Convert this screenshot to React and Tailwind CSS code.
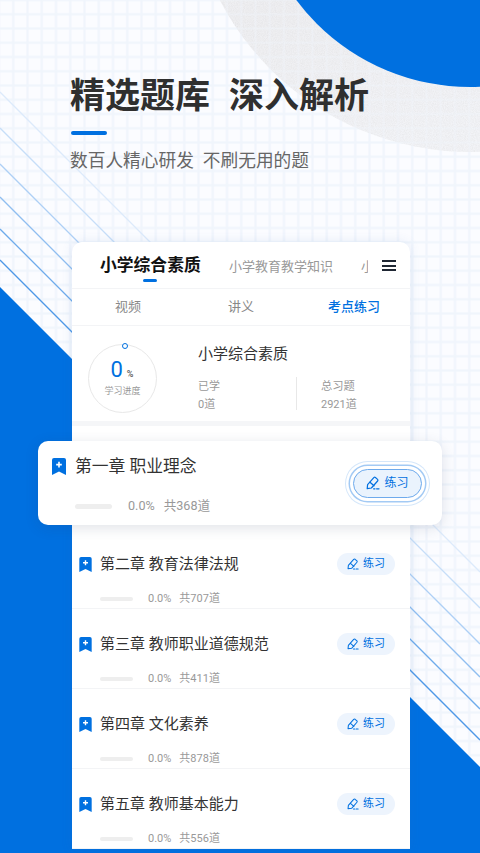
import React from 'react';

const chapters = [
  { title: '第二章 教育法律法规', total: 707 },
  { title: '第三章 教师职业道德规范', total: 411 },
  { title: '第四章 文化素养', total: 878 },
  { title: '第五章 教师基本能力', total: 556 },
];

const Backdrop = () => (
  <svg className="absolute inset-0" width="480" height="853" viewBox="0 0 480 853">
    <defs>
      <pattern id="grid" width="14.25" height="14.25" patternUnits="userSpaceOnUse" patternTransform="translate(6.125 7.125)">
        <path d="M7.125 0V14.25M0 7.125H14.25" stroke="#f0f5fc" strokeWidth="2" fill="none" />
      </pattern>
      <linearGradient id="ring" x1="0" y1="0" x2="0.3" y2="1">
        <stop offset="0.5" stopColor="#f5f5f7" />
        <stop offset="0.72" stopColor="#eeeef1" />
        <stop offset="1" stopColor="#f2f3f6" />
      </linearGradient>
      <filter id="grain" x="0" y="0" width="100%" height="100%">
        <feTurbulence type="fractalNoise" baseFrequency="0.9" numOctaves="2" seed="4" />
        <feColorMatrix values="0 0 0 0 0.5  0 0 0 0 0.5  0 0 0 0 0.5  0.35 0 0 0 -0.12" />
        <feComposite in2="SourceGraphic" operator="in" />
        <feMerge>
          <feMergeNode in="SourceGraphic" />
          <feMergeNode />
        </feMerge>
      </filter>
    </defs>
    <rect width="480" height="853" fill="#fbfcff" />
    <rect width="480" height="853" fill="url(#grid)" />
    <circle cx="470" cy="-130" r="282" fill="url(#ring)" filter="url(#grain)" />
    <rect width="480" height="853" fill="url(#grid)" opacity="0.4" />
    <circle cx="470" cy="-130" r="217" fill="#0070e0" />
    {/* diagonal stripes */}
    <path d="M0 92L480 572" stroke="#dceafb" strokeWidth="1.3" />
    <path d="M0 128L480 608" stroke="#c6def8" strokeWidth="1.3" />
    <path d="M0 164L480 644" stroke="#aed0f5" strokeWidth="1.3" />
    <path d="M0 197L480 677" stroke="#8fbef0" strokeWidth="1.3" />
    <path d="M0 229L480 709" stroke="#6eabeb" strokeWidth="1.3" />
    <path d="M0 260L480 740" stroke="#4e98e7" strokeWidth="1.3" />
    <path d="M0 287L480 767V853H0Z" fill="#0070e0" />
  </svg>
);

const Bookmark = ({ className }) => (
  <svg className={className} viewBox="0 0 14 17">
    <path d="M2 0H12A2 2 0 0 1 14 2V17L7 13.6L0 17V2A2 2 0 0 1 2 0Z" fill="#0070e0" />
    <path d="M7 3.8V9.4M4.2 6.6H9.8" stroke="#fff" strokeWidth="1.6" />
  </svg>
);

const PenIcon = ({ className }) => (
  <svg className={className} viewBox="0 0 14 14" fill="none" stroke="#0070e0" strokeWidth="1.2" strokeLinejoin="round" strokeLinecap="round">
    <path d="M1.2 12.6L1.6 8.6L7.8 1.6Q8.6 0.9 9.4 1.5L11.6 3.4Q12.3 4.2 11.6 5L5.4 12L1.2 12.6Z" />
    <path d="M4 6.2L8 9.8" />
    <path d="M7.6 12.8H9M10.6 12.8H13" />
  </svg>
);

const App = () => {
  return (
    <div className="relative w-[480px] h-[853px] overflow-hidden font-['Roboto','Noto_Sans_CJK_SC',sans-serif]">
      <Backdrop />

      <div className="relative pl-[70px] pt-[71px]">
        <div className="flex gap-[19px] text-[35px] leading-[52px] font-bold text-[#2f2f2f] h-[52px]">
          <span>精选题库</span>
          <span>深入解析</span>
        </div>
        <div className="w-[36px] h-[4px] ml-px mt-[8px] rounded-full bg-[#0070e0]" />
        <div className="flex gap-[9px] mt-[13px] text-[17.7px] leading-[26px] text-[#666666]">
          <span>数百人精心研发</span>
          <span>不刷无用的题</span>
        </div>
      </div>

      <div className="relative w-[338px] ml-[72px] mt-[68px] bg-white rounded-t-[10px] shadow-[0_0_12px_rgba(60,110,180,0.12)]">
        {/* subject tabs */}
        <div className="relative flex h-[47px] border-b border-[#f3f4f6] overflow-hidden">
          <div className="relative ml-[28px] w-[101px]">
            <div className="text-[16.8px] leading-[24px] mt-[11px] font-bold text-[#111111] whitespace-nowrap">小学综合素质</div>
            <div className="absolute left-[43px] top-[37px] w-[14px] h-[3px] rounded-full bg-[#0070e0]" />
          </div>
          <div className="ml-[28px] mt-[15px] text-[13px] leading-[20px] text-[#999999] whitespace-nowrap">小学教育教学知识</div>
          <div className="ml-[28px] mt-[15px] text-[13px] leading-[20px] text-[#999999] w-[7px] overflow-hidden whitespace-nowrap">小学</div>
          <div className="absolute right-[14px] top-[18px] w-[14px] h-[11px] flex flex-col justify-between">
            <div className="h-[2px] bg-[#1f2733]" />
            <div className="h-[2px] bg-[#1f2733]" />
            <div className="h-[2px] bg-[#1f2733]" />
          </div>
        </div>

        {/* section tabs */}
        <div className="flex h-[37px] items-center border-b border-[#f3f4f6] text-[13px] text-[#888888]">
          <span className="ml-[43px]">视频</span>
          <span className="ml-[87px]">讲义</span>
          <span className="ml-[74px] font-medium text-[#0070e0]">考点练习</span>
        </div>

        {/* summary */}
        <div className="flex h-[100px] border-b-[5px] border-[#f5f6f8]">
          <div className="relative w-[69px] h-[69px] ml-[16px] mt-[18px] rounded-full border border-[#e8e8e8] flex flex-col items-center">
            <div className="absolute left-[33px] -top-[2px] w-[6px] h-[6px] rounded-full border-[1.5px] border-[#0070e0] bg-white" />
            <div className="flex items-baseline mt-[11px] h-[28px] -ml-px">
              <span className="text-[22px] leading-[28px] text-[#0070e0]">0</span>
              <span className="text-[9px] ml-[4px] font-medium text-[#555555]">%</span>
            </div>
            <div className="text-[9px] leading-[13px] mt-px text-[#999999]">学习进度</div>
          </div>
          <div className="ml-[41px] mt-[17px]">
            <div className="text-[15px] leading-[22px] text-[#333333]">小学综合素质</div>
            <div className="flex mt-[12px]">
              <div className="w-[99px] h-[33px] border-r border-[#e8e8e8] text-[11px] leading-[18px] text-[#999999]">
                <div className="mt-px">已学</div>
                <div>0道</div>
              </div>
              <div className="ml-[24px] text-[11px] leading-[18px] text-[#999999]">
                <div className="mt-px text-[11.3px]">总习题</div>
                <div>2921道</div>
              </div>
            </div>
          </div>
        </div>

        {/* highlighted chapter */}
        <div className="relative flex items-center justify-between w-[404px] h-[84px] -ml-[34px] mt-[15px] mb-[4px] pl-[14px] pr-[20px] bg-white rounded-[10px] shadow-[0_3px_14px_rgba(40,60,90,0.14)]">
          <div className="h-full">
            <div className="flex items-center mt-[15px] h-[20px]">
              <Bookmark className="w-[14px] h-[17px]" />
              <span className="ml-[9px] text-[16.8px] leading-[24px] text-[#333333]">第一章 职业理念</span>
            </div>
            <div className="flex items-center mt-[21px] ml-[23px] text-[12.6px] leading-[18px] text-[#999999]">
              <div className="w-[37px] h-[5px] rounded-full bg-[#eeeeee]" />
              <span className="ml-[16px]">0.0%</span>
              <span className="ml-[9px]">共368道</span>
            </div>
          </div>
          <div className="flex items-center justify-center gap-[4px] w-[69px] h-[29px] rounded-full bg-[#eaf3fd] border border-[#6eaaec] shadow-[0_0_0_3px_#ffffff,0_0_0_4.5px_#a3caf4,0_0_0_7px_#ffffff,0_0_0_8px_#d5e7fa]">
            <PenIcon className="w-[14px] h-[14px]" />
            <span className="text-[12px] leading-[16px] text-[#0070e0]">练习</span>
          </div>
        </div>

        {/* chapter list */}
        {chapters.map((item) => (
          <div key={item.title} className="h-[80px] border-b border-[#f3f4f6] pt-[24px] pl-[7px] pr-[15px]">
            <div className="flex items-center justify-between h-[22px]">
              <div className="flex items-center">
                <Bookmark className="w-[13px] h-[15px]" />
                <span className="ml-[8px] text-[15px] leading-[22px] text-[#333333]">{item.title}</span>
              </div>
              <div className="flex items-center justify-center gap-[4px] w-[58px] h-[22px] rounded-full bg-[#edf4fd]">
                <PenIcon className="w-[12px] h-[12px]" />
                <span className="text-[11px] leading-[16px] text-[#0070e0]">练习</span>
              </div>
            </div>
            <div className="flex items-center h-[16px] mt-[16px] ml-[21px] text-[11px] leading-[16px] text-[#999999]">
              <div className="w-[33px] h-[4px] rounded-full bg-[#eeeeee]" />
              <span className="ml-[15px]">0.0%</span>
              <span className="ml-[8px]">共{item.total}道</span>
            </div>
          </div>
        ))}
      </div>
    </div>
  );
};

export default App;
